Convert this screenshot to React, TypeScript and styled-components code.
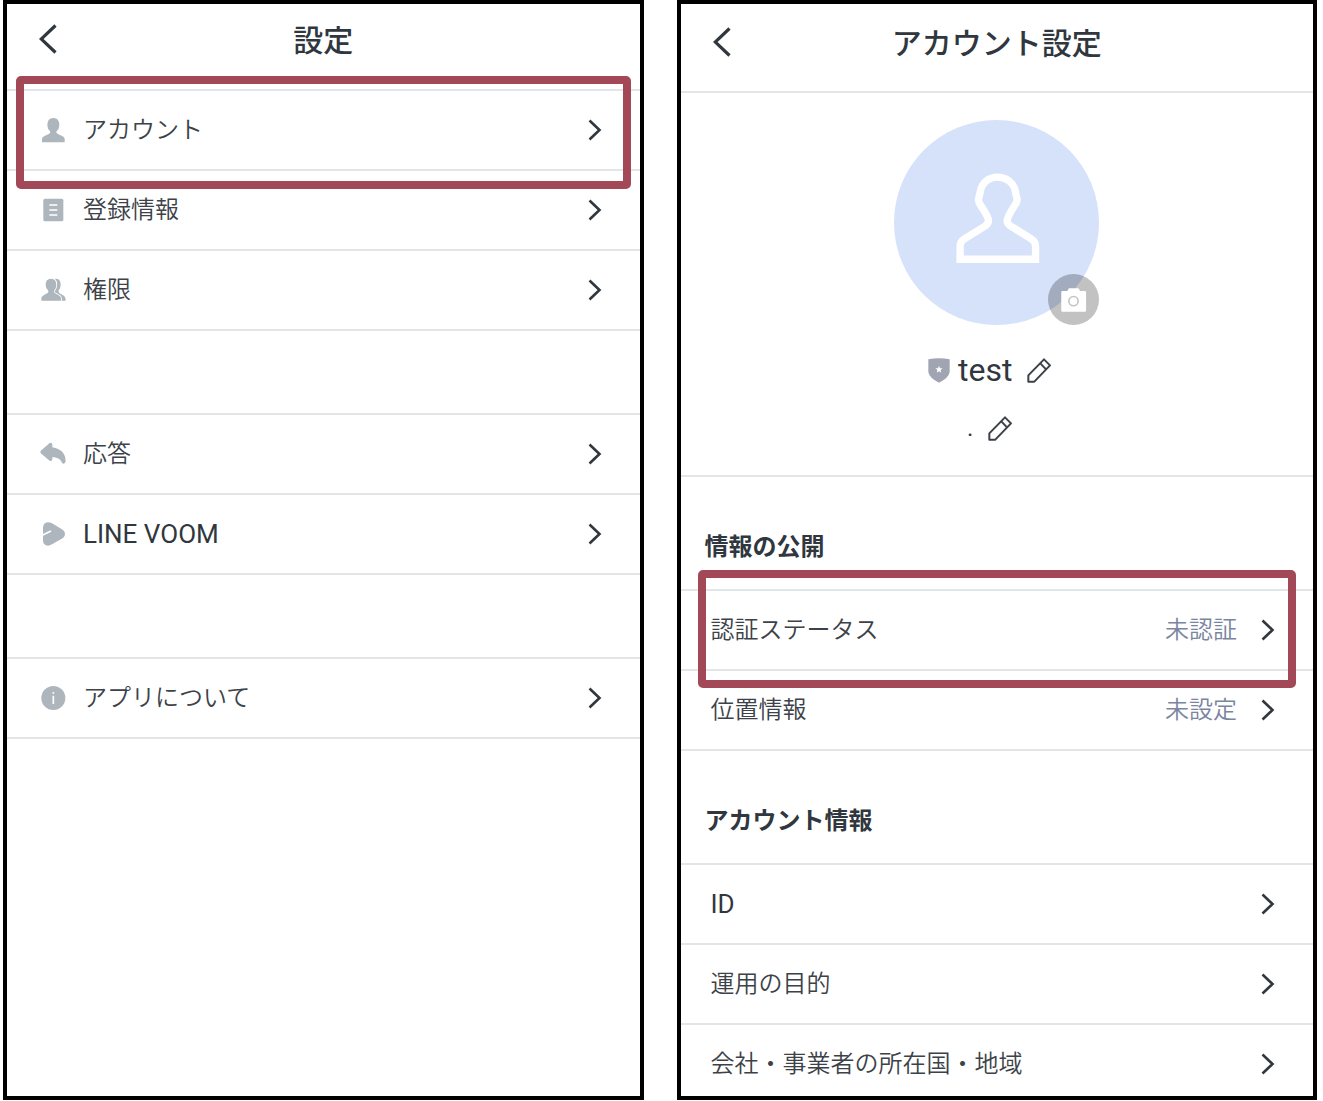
import React from "react";
import styled, { createGlobalStyle } from "styled-components";

const color = {
  ink: "#30373e",
  text: "#3c4248",
  muted: "#7a85a0",
  icon: "#adb5bd",
  line: "#e3e6e8",
  frame: "#000000",
  mark: "#a34856",
};

const GlobalStyle = createGlobalStyle`
  *, *::before, *::after { box-sizing: border-box; }
  body {
    margin: 0;
    background: #ffffff;
    color: ${color.ink};
    font-family: Roboto, "Noto Sans CJK JP", sans-serif;
  }
  button { font: inherit; color: inherit; background: none; border: 0; padding: 0; cursor: pointer; }
  ul { list-style: none; margin: 0; padding: 0; }
  h1, h2, p { margin: 0; }
  svg { display: block; flex: none; }
`;

const Page = styled.main`
  display: grid;
  grid-template-columns: 1fr 1fr;
  gap: 33px;
  height: 100vh;
  padding: 0 6px 1px 3px;
`;

const Screen = styled.section`
  min-width: 0;
  min-height: 0;
  overflow: hidden;
  border: 4px solid ${color.frame};
  background: #ffffff;
`;

const Header = styled.header<{ $bottom: number }>`
  display: grid;
  grid-template-columns: 1fr auto 1fr;
  align-items: center;
  padding: 17px 32px ${(p) => p.$bottom}px;
`;

const TallHeader = styled(Header)`
  padding-top: 20px;
`;

const BackButton = styled.button`
  justify-self: start;
  padding-bottom: 4px;
`;

const Title = styled.h1`
  font-size: 30px;
  line-height: 40px;
  font-weight: 500;
`;

const List = styled.ul<{ $spaced?: boolean }>`
  margin-top: ${(p) => (p.$spaced ? 82 : 0)}px;
  border-top: 2px solid ${color.line};
`;

const Item = styled.li`
  position: relative;
  border-bottom: 2px solid ${color.line};
`;

const RowButton = styled.button<{ $inset: number }>`
  display: flex;
  align-items: center;
  width: 100%;
  height: 78px;
  padding: 0 38px 0 ${(p) => p.$inset}px;
  text-align: left;
`;

const RowIcon = styled.span`
  margin-right: 17px;
`;

const RowLabel = styled.span<{ $latin?: boolean }>`
  flex: 1;
  font-size: ${(p) => (p.$latin ? 26 : 24)}px;
  line-height: 32px;
  font-weight: ${(p) => (p.$latin ? 400 : 350)};
  color: ${(p) => (p.$latin ? color.ink : color.text)};
`;

const RowValue = styled.span`
  margin-right: 24px;
  font-size: 24px;
  line-height: 32px;
  font-weight: 350;
  color: ${color.muted};
`;

const Highlight = styled.span<{ $top: number; $side: number; $bottom: number }>`
  position: absolute;
  z-index: 1;
  top: -${(p) => p.$top}px;
  bottom: -${(p) => p.$bottom}px;
  left: ${(p) => p.$side}px;
  right: ${(p) => p.$side}px;
  border: 8px solid ${color.mark};
  border-radius: 5px;
  pointer-events: none;
`;

const Profile = styled.div`
  display: flex;
  flex-direction: column;
  align-items: center;
  padding: 27px 0 29px;
  border-top: 2px solid ${color.line};
`;

const Avatar = styled.div`
  position: relative;
  width: 205px;
  height: 205px;
  margin-bottom: 27px;
  border-radius: 50%;
  background: #d5e2fa;
`;

const CameraButton = styled.button`
  position: absolute;
  right: 0;
  bottom: 0;
  width: 51px;
  height: 51px;
  border-radius: 50%;
  background: rgba(0, 0, 0, 0.24);
`;

const ProfileLine = styled.div`
  display: flex;
  align-items: center;
  height: 36px;
  padding-right: 14px;

  & + & {
    margin-top: 22px;
  }
`;

const Name = styled.p`
  margin: 0 15px 0 8px;
  font-size: 32px;
  line-height: 36px;
`;

const StatusMessage = styled.p`
  margin-right: 15px;
  font-size: 24px;
  line-height: 32px;
`;

const SectionTitle = styled.h2`
  padding: 58px 24px 30px;
  font-size: 24px;
  line-height: 24px;
  font-weight: 700;
`;

const InfoSection = styled.section`
  &:first-of-type {
    border-top: 2px solid ${color.line};
  }
`;

const Back = () => (
  <svg width="18" height="30" viewBox="0 0 18 30" fill="none" stroke={color.ink} strokeWidth="3.2" aria-hidden="true">
    <path d="M16.500 1.500 2.200 15 16.500 28.500" />
  </svg>
);

const Chevron = () => (
  <svg width="14" height="22" viewBox="0 0 14 22" fill="none" stroke={color.ink} strokeWidth="2.6" aria-hidden="true">
    <path d="M1.500 1.500 11.500 11 1.500 20.500" />
  </svg>
);

const Pencil = () => (
  <svg width="24" height="25" viewBox="0 0 72 75" fill="none" stroke={color.text} strokeWidth="6" strokeLinejoin="round" aria-hidden="true">
    <path d="M4 71V52L51 4 69 22 22 71ZM40 16 57 34" />
  </svg>
);

const Shield = () => (
  <svg width="22" height="25" viewBox="0 0 66 75" aria-hidden="true">
    <path d="M1 4Q33-3 65 4V42Q62 60 33 74 4 60 1 42Z" fill="#a0a4b3" />
    <path d="m33 23 3 7.500 8 .5-6.200 5 2 8-6.800-4.500-6.800 4.500 2-8-6.200-5 8-.5Z" fill="#fff" />
  </svg>
);

const Person = () => (
  <svg width="100%" height="100%" viewBox="103 60 614 614" fill="none" stroke="#fff" strokeWidth="22" aria-hidden="true">
    <path d="M301 477V438Q301 424 314 416L377 377Q390 367 384 353 380 342 362 315 354 304 357 293 360 283 361 276C366 246 388 231 413 231S462 246 467 276Q468 285 471 293 474 304 465 315 448 342 444 353 438 367 451 377L514 416Q527 424 527 438V477Z" />
  </svg>
);

const Camera = () => (
  <svg width="51" height="51" viewBox="563 519 154 154" aria-hidden="true">
    <path d="M607 570H621L626 562H655L660 570H674Q678 570 678 574V629Q678 633 674 633H607Q603 633 603 629V574Q603 570 607 570Z" fill="#fff" />
    <circle cx="640" cy="601" r="14" fill="none" stroke="#c4c5c7" strokeWidth="5" />
  </svg>
);

const glyphs = {
  account: (
    <svg width="26" height="26" viewBox="119 346 78 78" fill={color.icon}>
      <path d="M125 422V411Q126 405 134 402L147 396Q152 393 149 388 141 382 141 371 141 349 159 349T177 371Q177 382 169 388 166 393 171 396L184 402Q192 405 193 411V422Z" />
    </svg>
  ),
  document: (
    <svg width="26" height="26" viewBox="119 587 78 78">
      <rect x="129" y="592" width="60" height="68" rx="5" fill={color.icon} />
      <path d="M147 611H171M147 626H171M147 641H171" stroke="#fff" strokeWidth="4" />
    </svg>
  ),
  people: (
    <svg width="26" height="26" viewBox="119 829 78 78" fill={color.icon}>
      <path d="M160 835Q181 831 181 852 181 862 175 869 173 873 177 877L188 884Q196 888 196 900H160Z" />
      <path
        d="M123 900V892Q124 887 131 883L142 877Q146 874 143 869 136 862 136 852 136 834 152 834T168 852Q168 862 162 869 159 874 163 877L174 883Q182 887 182 893V900Z"
        stroke="#fff"
        strokeWidth="5"
        paintOrder="stroke"
      />
    </svg>
  ),
  reply: (
    <svg width="26" height="26" viewBox="121 122 78 78" fill={color.icon}>
      <path d="M122 155Q122 152 125 150L150 128Q157 125 158 132V141Q197 147 198 183 197 190 191 190 187 190 186 185 180 171 158 170V177Q157 184 150 181L125 160Q122 158 122 155Z" />
    </svg>
  ),
  voom: (
    <svg width="26" height="26" viewBox="119 361 78 78">
      <path d="M128 380Q130 365 144 365 149 365 155 368L188 388Q194 392 194 400T188 412L155 431Q148 435 143 435 129 434 128 420Z" fill={color.icon} />
      <path d="M126 404 152 391" stroke="#fff" strokeWidth="5" />
    </svg>
  ),
  info: (
    <svg width="26" height="26" viewBox="119 854 78 78">
      <circle cx="159" cy="893" r="36" fill={color.icon} />
      <path d="M159 875V880M159 886V911" stroke="#fff" strokeWidth="5" />
    </svg>
  ),
};

type RowProps = {
  label: string;
  icon?: keyof typeof glyphs;
  value?: string;
  latin?: boolean;
  children?: React.ReactNode;
};

const Row = ({ label, icon, value, latin, children }: RowProps) => (
  <Item>
    <RowButton type="button" $inset={icon ? 33 : 30}>
      {icon && <RowIcon aria-hidden="true">{glyphs[icon]}</RowIcon>}
      <RowLabel $latin={latin}>{label}</RowLabel>
      {value && <RowValue>{value}</RowValue>}
      <Chevron />
    </RowButton>
    {children}
  </Item>
);

export default function App() {
  return (
    <>
      <GlobalStyle />
      <Page lang="ja">
        <Screen>
          <Header $bottom={28}>
            <BackButton type="button" aria-label="戻る">
              <Back />
            </BackButton>
            <Title>設定</Title>
          </Header>
          <List>
            <Row icon="account" label="アカウント">
              <Highlight $top={15} $side={9} $bottom={20} />
            </Row>
            <Row icon="document" label="登録情報" />
            <Row icon="people" label="権限" />
          </List>
          <List $spaced>
            <Row icon="reply" label="応答" />
            <Row icon="voom" label="LINE VOOM" latin />
          </List>
          <List $spaced>
            <Row icon="info" label="アプリについて" />
          </List>
        </Screen>

        <Screen>
          <TallHeader $bottom={27}>
            <BackButton type="button" aria-label="戻る">
              <Back />
            </BackButton>
            <Title>アカウント設定</Title>
          </TallHeader>
          <Profile>
            <Avatar>
              <Person />
              <CameraButton type="button" aria-label="写真を変更">
                <Camera />
              </CameraButton>
            </Avatar>
            <ProfileLine>
              <Shield />
              <Name>test</Name>
              <button type="button" aria-label="名前を編集">
                <Pencil />
              </button>
            </ProfileLine>
            <ProfileLine>
              <StatusMessage>.</StatusMessage>
              <button type="button" aria-label="ひとことを編集">
                <Pencil />
              </button>
            </ProfileLine>
          </Profile>
          <InfoSection>
            <SectionTitle>情報の公開</SectionTitle>
            <List>
              <Row label="認証ステータス" value="未認証">
                <Highlight $top={21} $side={17} $bottom={19} />
              </Row>
              <Row label="位置情報" value="未設定" />
            </List>
          </InfoSection>
          <InfoSection>
            <SectionTitle>アカウント情報</SectionTitle>
            <List>
              <Row label="ID" latin />
              <Row label="運用の目的" />
              <Row label="会社・事業者の所在国・地域" />
            </List>
          </InfoSection>
        </Screen>
      </Page>
    </>
  );
}
